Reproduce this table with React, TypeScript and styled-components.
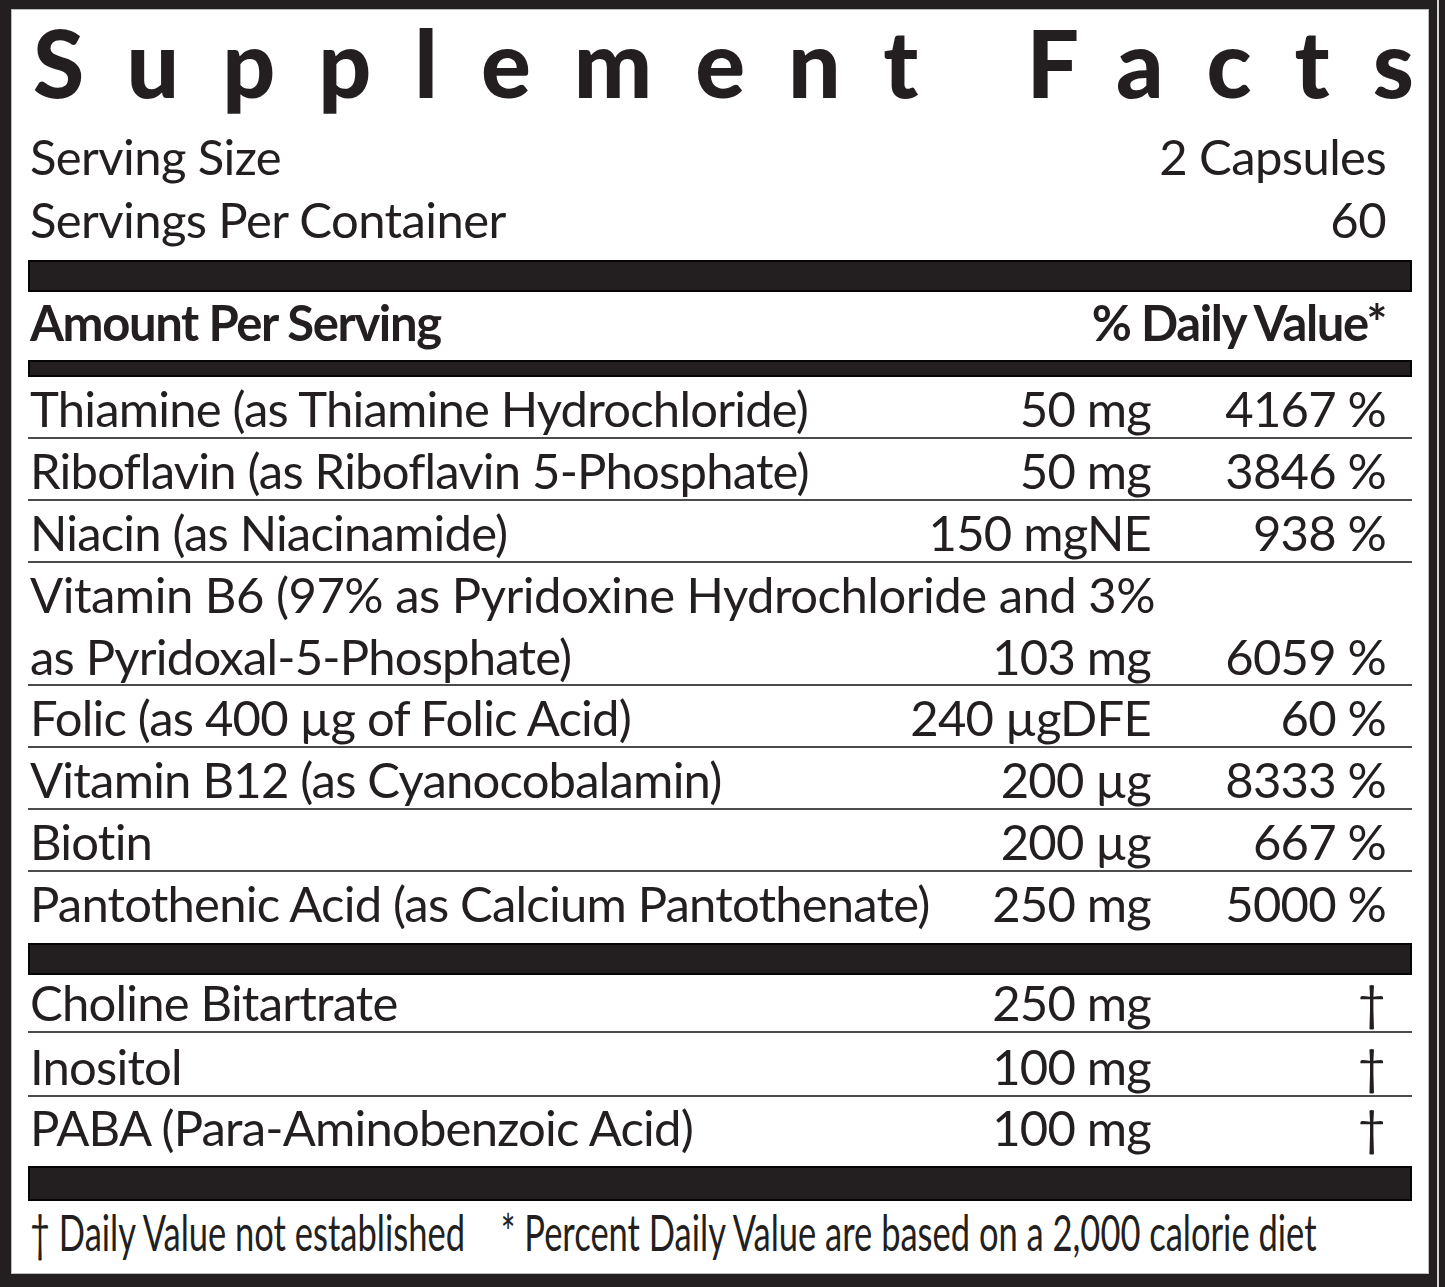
import React from "react";
import styled, { createGlobalStyle } from "styled-components";

const Global = createGlobalStyle`
  html, body { margin: 0; padding: 0; background: #231f20; }
  body { font-family: Lato, "Open Sans", sans-serif; color: #231f20; }
`;

const Frame = styled.div`
  box-sizing: border-box;
  width: 1439px;
  height: 1287px;
  padding: 10px 9px 14px 12px;
  border-right: 2px solid #d4d4d4;
  display: flex;
`;

const Panel = styled.div`
  flex: 1;
  min-width: 0;
  background: #ffffff;
  outline: 1px solid #bdbdbd;
  padding: 0 16px;
  display: flex;
  flex-direction: column;
`;

const Title = styled.h1`
  margin: 0;
  height: 118px;
  flex: none;
  box-sizing: border-box;
  padding: 0 0 0 5px;
  font-family: Lato, sans-serif;
  font-weight: 900;
  font-size: 93px;
  line-height: 104px;
  letter-spacing: 43px;
  white-space: nowrap;
  color: #231f20;
`;

const LastLetter = styled.span`
  letter-spacing: 0;
`;

const InfoRow = styled.div`
  display: flex;
  justify-content: space-between;
  align-items: flex-end;
  height: 63px;
  flex: none;
  box-sizing: border-box;
  padding: 0 26px 10px 2px;
  font-size: 49px;
  line-height: 49px;
  letter-spacing: -0.6px;
`;

const Bar = styled.div<{ $h: number; $mt?: number }>`
  box-sizing: border-box;
  height: ${(p) => p.$h}px;
  margin-top: ${(p) => p.$mt ?? 0}px;
  background: #231f20;
  border: 2px solid #050505;
  flex: none;
`;

const HeadRow = styled.div`
  display: flex;
  justify-content: space-between;
  align-items: flex-end;
  height: 68px;
  flex: none;
  box-sizing: border-box;
  padding: 0 26px 13px 2px;
  font-size: 49px;
  line-height: 49px;
  font-weight: 700;
  letter-spacing: -1.4px;
`;

const Row = styled.div<{ $h: number; $line?: boolean }>`
  display: grid;
  grid-template-columns: 1fr auto 235px;
  align-items: end;
  height: ${(p) => p.$h}px;
  flex: none;
  box-sizing: border-box;
  border-bottom: 2px solid ${(p) => (p.$line ? "#4b4b4b" : "transparent")};
  padding: 0 26px 4px 2px;
  font-size: 49px;
  line-height: 49px;
  letter-spacing: -0.8px;
  white-space: nowrap;
`;

const Wrapped = styled.div`
  display: flex;
  flex-direction: column;
  height: 123px;
  flex: none;
  box-sizing: border-box;
  border-bottom: 2px solid #4b4b4b;
  padding: 0 26px 4px 2px;
  font-size: 49px;
  line-height: 62px;
  letter-spacing: -0.5px;
  white-space: nowrap;
`;

const WrapLine = styled.div`
  display: grid;
  grid-template-columns: 1fr auto 235px;
  letter-spacing: -0.8px;
`;

const Name = styled.span``;
const Amount = styled.span`
  text-align: right;
`;
const DV = styled.span<{ $dagger?: boolean }>`
  text-align: right;
  padding-right: ${(p) => (p.$dagger ? 1 : 0)}px;
`;

const Footer = styled.div`
  flex: 1;
  display: flex;
  align-items: flex-end;
  padding: 0 0 16px 2px;
  font-size: 50px;
  line-height: 50px;
  white-space: nowrap;
`;

const Condensed = styled.div`
  display: flex;
  gap: 52px;
  transform: scaleX(0.69);
  transform-origin: left bottom;
`;

type Item = { name: string; amt: string; dv: string };

const vitamins: Item[] = [
  { name: "Thiamine (as Thiamine Hydrochloride)", amt: "50 mg", dv: "4167 %" },
  { name: "Riboflavin (as Riboflavin 5-Phosphate)", amt: "50 mg", dv: "3846 %" },
  { name: "Niacin (as Niacinamide)", amt: "150 mgNE", dv: "938 %" },
];

const vitamins2: Item[] = [
  { name: "Folic (as 400 µg of Folic Acid)", amt: "240 µgDFE", dv: "60 %" },
  { name: "Vitamin B12 (as Cyanocobalamin)", amt: "200 µg", dv: "8333 %" },
  { name: "Biotin", amt: "200 µg", dv: "667 %" },
];

const others: Item[] = [
  { name: "Choline Bitartrate", amt: "250 mg", dv: "†" },
  { name: "Inositol", amt: "100 mg", dv: "†" },
  { name: "PABA (Para-Aminobenzoic Acid)", amt: "100 mg", dv: "†" },
];

export default function App() {
  return (
    <>
      <Global />
      <Frame>
        <Panel>
          <Title>
            Supplement Fact<LastLetter>s</LastLetter>
          </Title>
          <InfoRow>
            <span>Serving Size</span>
            <span>2 Capsules</span>
          </InfoRow>
          <InfoRow>
            <span>Servings Per Container</span>
            <span>60</span>
          </InfoRow>
          <Bar $h={32} $mt={6} />
          <HeadRow>
            <span>Amount Per Serving</span>
            <span>% Daily Value*</span>
          </HeadRow>
          <Bar $h={17} />
          {vitamins.map((v) => (
            <Row key={v.name} $h={62} $line>
              <Name>{v.name}</Name>
              <Amount>{v.amt}</Amount>
              <DV>{v.dv}</DV>
            </Row>
          ))}
          <Wrapped>
            <span>Vitamin B6 (97% as Pyridoxine Hydrochloride and 3%</span>
            <WrapLine>
              <Name>as Pyridoxal-5-Phosphate)</Name>
              <Amount>103 mg</Amount>
              <DV>6059 %</DV>
            </WrapLine>
          </Wrapped>
          {vitamins2.map((v) => (
            <Row key={v.name} $h={62} $line>
              <Name>{v.name}</Name>
              <Amount>{v.amt}</Amount>
              <DV>{v.dv}</DV>
            </Row>
          ))}
          <Row $h={62}>
            <Name>Pantothenic Acid (as Calcium Pantothenate)</Name>
            <Amount>250 mg</Amount>
            <DV>5000 %</DV>
          </Row>
          <Bar $h={32} $mt={9} />
          {others.map((v, i) => (
            <Row key={v.name} $h={i === 0 ? 58 : i === 1 ? 64 : 61} $line={i < 2}>
              <Name>{v.name}</Name>
              <Amount>{v.amt}</Amount>
              <DV $dagger>{v.dv}</DV>
            </Row>
          ))}
          <Bar $h={35} $mt={8} />
          <Footer>
            <Condensed>
              <span>† Daily Value not established</span>
              <span>* Percent Daily Value are based on a 2,000 calorie diet</span>
            </Condensed>
          </Footer>
        </Panel>
      </Frame>
    </>
  );
}
